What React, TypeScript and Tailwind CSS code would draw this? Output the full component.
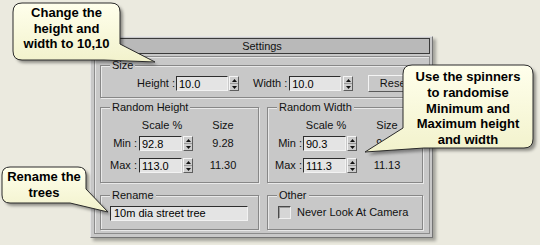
import React from 'react';

const Spinner: React.FC<{ className?: string }> = ({ className = '' }) => (
  <div className={`flex h-[15px] w-[10px] shrink-0 flex-col border border-t-[#f4f4f4] border-l-[#f4f4f4] border-b-[#5e5e5e] border-r-[#5e5e5e] bg-[#cdcdcd] ${className}`}>
    <div className="flex flex-1 items-center justify-center border-b border-b-[#9a9a9a]">
      <svg width="5" height="3" viewBox="0 0 5 3"><path d="M2.5 0L5 3H0Z" fill="#111" /></svg>
    </div>
    <div className="flex flex-1 items-center justify-center">
      <svg width="5" height="3" viewBox="0 0 5 3"><path d="M0 0H5L2.5 3Z" fill="#111" /></svg>
    </div>
  </div>
);

const Field: React.FC<{ value: string; className?: string }> = ({ value, className = '' }) => (
  <input
    readOnly
    value={value}
    className={`h-[15px] shrink-0 border border-t-[#2e2e2e] border-l-[#2e2e2e] border-b-[#f2f2f2] border-r-[#f2f2f2] bg-[#e4e4e4] pl-[2px] text-[11px] leading-[13px] text-black outline-none ${className}`}
  />
);

const Group: React.FC<{ title: string; className?: string; children: React.ReactNode }> = ({ title, className = '', children }) => (
  <fieldset className={`border border-[#878787] shadow-[1px_1px_0_#e9e9e9,inset_1px_1px_0_#e9e9e9] ${className}`}>
    <legend className="ml-[9px] bg-[#c8c8c8] px-[2px] leading-[13px]">{title}</legend>
    {children}
  </fieldset>
);

type RangeProps = {
  title: string;
  labelW: string;
  inputMl: string;
  headPad: string;
  min: string;
  max: string;
  minSize: string;
  maxSize: string;
  className?: string;
};

const RandomGroup: React.FC<RangeProps> = ({ title, labelW, inputMl, headPad, min, max, minSize, maxSize, className = '' }) => {
  const row = (label: string, v: string, s: string, mt: string) => (
    <div className={`flex h-[15px] items-center ${mt}`}>
      <div className={`${labelW} shrink-0 text-right`}>{label}</div>
      <Field value={v} className={`${inputMl} w-[43px]`} />
      <Spinner className="ml-[1px]" />
      <div className="ml-[5px] w-[50px] text-center">{s}</div>
    </div>
  );
  return (
    <Group title={title} className={`pt-[5px] pb-[9px] ${className}`}>
      <div className="flex h-[13px] items-center leading-[13px]">
        <div className={`${headPad} shrink-0`} />
        <div className="w-[50px] text-center">Scale %</div>
        <div className="w-[11px]" />
        <div className="w-[50px] text-center">Size</div>
      </div>
      {row('Min :', min, minSize, 'mt-[4px]')}
      {row('Max :', max, maxSize, 'mt-[7px]')}
    </Group>
  );
};

const bubbles = [
  'M22 3H111Q120 3 120 12V44L155 62L104 60H22Q13 60 13 51V12Q13 3 22 3Z',
  'M412 65H524Q533 65 533 74V139Q533 148 524 148H424L365 152L403 128V74Q403 65 412 65Z',
  'M10 167H78Q86 167 86 175V189L108 212L70 203H10Q2 203 2 195V175Q2 167 10 167Z',
];

export default function App() {
  return (
    <div className="relative h-[245px] w-[540px] overflow-hidden bg-[#ebeadf] pl-[90px] pt-[36px] font-['Liberation_Sans',Arial,sans-serif] text-[11px] text-[#111]">
      {/* rollout panel */}
      <div className="flex h-[202px] w-[343px] flex-col border border-t-[#e4e4e4] border-l-[#e4e4e4] border-b-[#747474] border-r-[#747474] bg-[#c8c8c8] pl-[3px] pr-[2px] pt-[1px] shadow-[3px_3px_3px_rgba(0,0,0,0.3)]">
        <div className="flex h-[16px] items-center justify-center border border-[#3a3a3a] bg-[#b9b9b9] leading-none">Settings</div>
        <div className="mt-[2px] flex h-[178px] flex-col border border-[#8c8c8c] pl-[5px] pr-[6px] pt-[2px] shadow-[inset_1px_1px_0_#e6e6e6]">
          <Group title="Size" className="pt-[4px] pb-[6px]">
            <div className="flex h-[15px] items-center">
              <div className="w-[74px] shrink-0 text-right">Height :</div>
              <Field value="10.0" className="ml-[1px] w-[52px]" />
              <Spinner className="ml-[1px]" />
              <div className="ml-[14px] shrink-0">Width :</div>
              <Field value="10.0" className="ml-[2px] w-[52px]" />
              <Spinner className="ml-[2px]" />
              <button className="ml-[15px] flex h-[17px] w-[52px] shrink-0 items-center justify-center border border-t-[#f4f4f4] border-l-[#f4f4f4] border-b-[#5a5a5a] border-r-[#5a5a5a] bg-[#c8c8c8] text-[11px]">
                Reset
              </button>
            </div>
          </Group>

          <div className="mt-[3px] flex gap-[8px]">
            <RandomGroup
              title="Random Height"
              className="w-[159px] shrink-0"
              labelW="w-[36px]"
              inputMl="ml-[2px]"
              headPad="w-[36px]"
              min="92.8"
              max="113.0"
              minSize="9.28"
              maxSize="11.30"
            />
            <RandomGroup
              title="Random Width"
              className="flex-1"
              labelW="w-[34px]"
              inputMl="ml-[1px]"
              headPad="w-[33px]"
              min="90.3"
              max="111.3"
              minSize="9.03"
              maxSize="11.13"
            />
          </div>

          <div className="mt-[6px] flex gap-[8px]">
            <Group title="Rename" className="w-[159px] shrink-0 pt-[3px] pb-[7px]">
              <Field value="10m dia street tree" className="ml-[9px] w-[138px] pl-[3px]" />
            </Group>
            <Group title="Other" className="flex-1 pt-[3px] pb-[7px]">
              <div className="flex h-[15px] items-center">
                <div className="ml-[10px] h-[13px] w-[13px] shrink-0 border border-t-[#4a4a4a] border-l-[#4a4a4a] border-b-[#f0f0f0] border-r-[#f0f0f0] bg-[#d6d6d6] shadow-[inset_1px_1px_0_#9a9a9a]" />
                <div className="ml-[6px]">Never Look At Camera</div>
              </div>
            </Group>
          </div>
        </div>
      </div>

      {/* callouts */}
      <svg className="pointer-events-none absolute inset-0" width="540" height="245" viewBox="0 0 540 245">
        <defs>
          <linearGradient id="tip" x1="0" y1="0" x2="0" y2="1">
            <stop offset="0" stopColor="#ffffec" />
            <stop offset="1" stopColor="#f2f2cc" />
          </linearGradient>
          <filter id="blur" x="-10%" y="-10%" width="130%" height="130%">
            <feGaussianBlur stdDeviation="1.6" />
          </filter>
        </defs>
        {bubbles.map((d, i) => (
          <path key={`s${i}`} d={d} transform="translate(3 3)" fill="rgba(0,0,0,0.38)" filter="url(#blur)" />
        ))}
        {bubbles.map((d, i) => (
          <path key={i} d={d} fill="url(#tip)" stroke="#2a2a2a" strokeWidth="1" />
        ))}
      </svg>
      <div className="absolute left-[13px] top-[5px] w-[107px] text-center text-[13px] font-bold leading-[15.5px] text-black">
        Change the<br />height and<br />width to 10,10
      </div>
      <div className="absolute left-[403px] top-[69px] w-[130px] text-center text-[13px] font-bold leading-[15.75px] text-black">
        Use the spinners<br />to randomise<br />Minimum and<br />Maximum height<br />and width
      </div>
      <div className="absolute left-[2px] top-[169px] w-[84px] text-center text-[13px] font-bold leading-[16px] text-black">
        Rename the<br />trees
      </div>
    </div>
  );
}
